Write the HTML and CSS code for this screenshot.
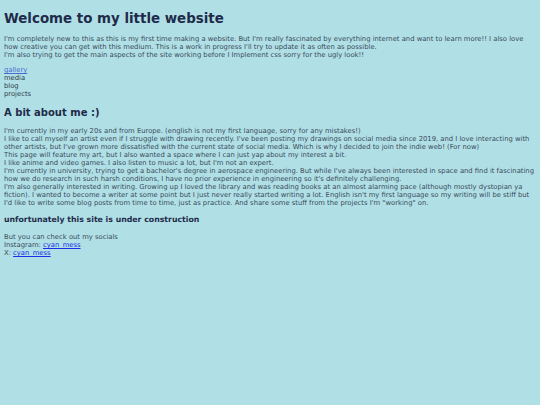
FILE: index.html
```html
<!DOCTYPE html>
<html>
<head>
<meta charset="utf-8">
<title>Welcome to my little website</title>
<link rel="stylesheet" href="styles.css">
</head>
<body class="page">
<h1 class="title">Welcome to my little website</h1>
<p class="text">I'm completely new to this as this is my first time making a website. But I'm really fascinated by everything internet and want to learn more!! I also love how creative you can get with this medium. This is a work in progress I'll try to update it as often as possible.<br>I'm also trying to get the main aspects of the site working before I Implement css sorry for the ugly look!!</p>
<nav class="nav">
<a class="nav-link" href="#">gallery</a><br>
media<br>
blog<br>
projects
</nav>
<h2 class="section">A bit about me :)</h2>
<p class="text">I'm currently in my early 20s and from Europe. (english is not my first language, sorry for any mistakes!)<br>I like to call myself an artist even if I struggle with drawing recently. I've been posting my drawings on social media since 2019, and I love interacting with other artists, but I've grown more dissatisfied with the current state of social media. Which is why I decided to join the indie web! (For now)<br>This page will feature my art, but I also wanted a space where I can just yap about my interest a bit.<br>I like anime and video games. I also listen to music a lot, but I'm not an expert.<br>I'm currently in university, trying to get a bachelor's degree in aerospace engineering. But while I've always been interested in space and find it fascinating how we do research in such harsh conditions, I have no prior experience in engineering so it's definitely challenging.<br>I'm also generally interested in writing. Growing up I loved the library and was reading books at an almost alarming pace (although mostly dystopian ya fiction). I wanted to become a writer at some point but I just never really started writing a lot. English isn't my first language so my writing will be stiff but I'd like to write some blog posts from time to time, just as practice. And share some stuff from the projects I'm "working" on.</p>
<h3 class="sub">unfortunately this site is under construction</h3>
<p class="text">But you can check out my socials<br>Instagram: <a class="social" href="#">cyan_mess</a><br>X: <a class="social" href="#">cyan_mess</a></p>
</body>
</html>
```
FILE: styles.css
```css
html { background: #b0e0e6; }
.page {
  margin: 4px;
  font-family: "DejaVu Sans", Verdana, sans-serif;
  font-size: 6.8px;
  line-height: 8px;
  color: #3a4a5a;
  background: #b0e0e6;
}
.title {
  font-size: 13.4px;
  line-height: 16px;
  margin: 7px 0 8px;
  color: #1f2b4a;
}
.section {
  font-size: 10px;
  line-height: 12px;
  margin: 9px 0 8px;
  color: #1f2b4a;
}
.sub {
  font-size: 7.8px;
  line-height: 10px;
  margin: 8px 0 8px;
  color: #1f2b4a;
}
.text { margin: 7px 0; }
.nav { color: #2f3b4a; }
.nav-link { color: #4a6ad0; }
.social { color: #1a2ee8; }
```
